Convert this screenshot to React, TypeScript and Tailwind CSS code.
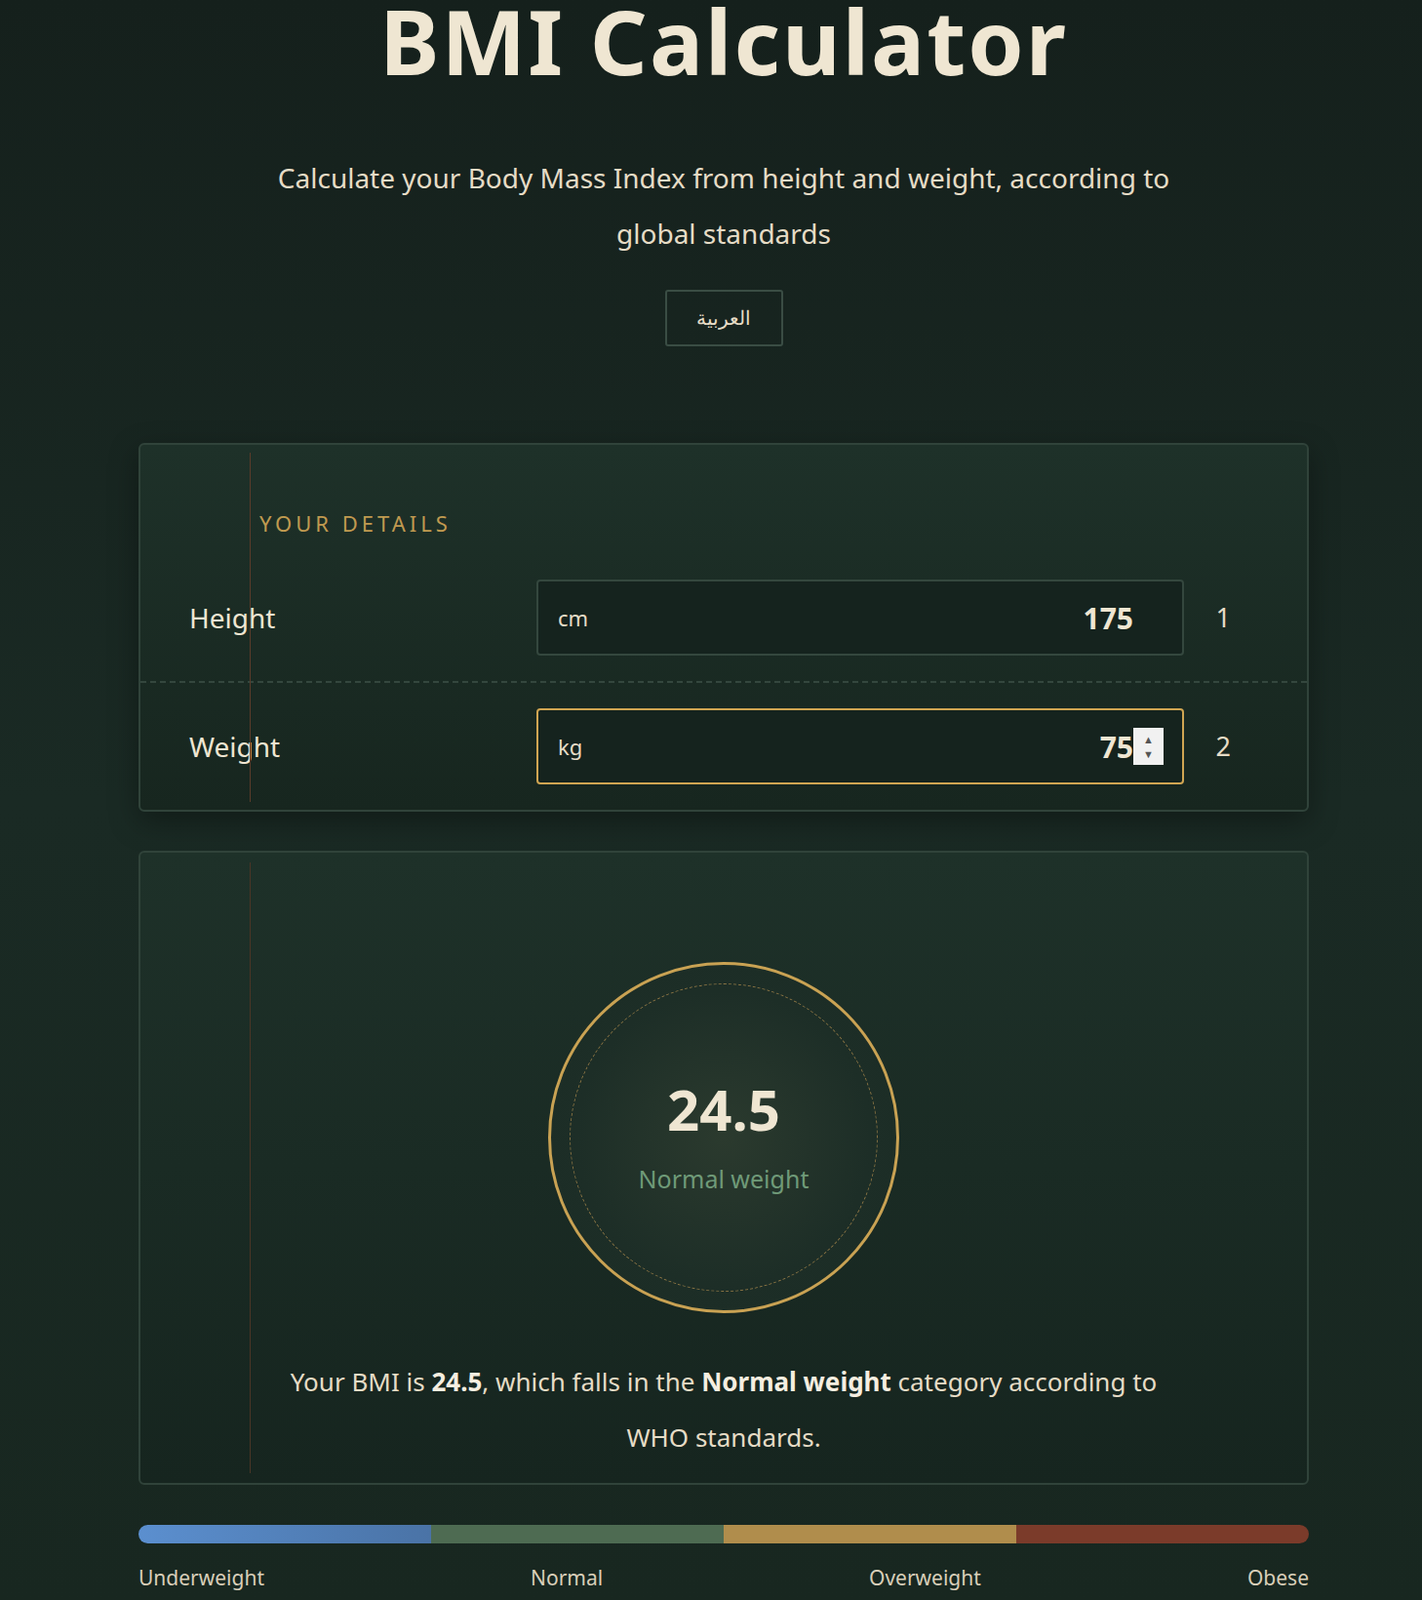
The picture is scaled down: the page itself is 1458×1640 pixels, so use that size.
import React from 'react';

const sans = "[font-family:'Noto_Sans',sans-serif]";
const serif = "[font-family:'Liberation_Serif',serif]";

const Row = ({ label, unit, value, n, active }: { label: string; unit: string; value: string; n: string; active?: boolean }) => (
  <div className="flex items-center h-[130px] pl-[50px] pr-[66px]">
    <div className="w-[356px] text-[28px] text-[#efe6d2]">{label}</div>
    <div
      className={`flex-1 h-[78px] rounded-[4px] flex items-center justify-between pl-5 pr-[50px] bg-[#15231e] border-2 ${
        active ? 'border-[#d0a552]' : 'border-[#34473e]'
      }`}
    >
      <span className="text-[22px] text-[#e6dcc6]">{unit}</span>
      <span className="relative flex items-center text-[30px] font-bold text-[#efe6d2]">
        {value}
        {active && (
          <span className="absolute left-full w-[31px] h-[38px] bg-[#f1f1f1] flex flex-col items-center justify-center text-[11px] text-[#555] leading-[15px]">
            <span>▲</span>
            <span>▼</span>
          </span>
        )}
      </span>
    </div>
    <div className={`${serif} w-[60px] text-right pr-3 text-[27px] text-[#e6dcc6]`}>{n}</div>
  </div>
);

export default function App() {
  return (
    <div className={`${sans} min-h-[1640px] pl-[26px] bg-gradient-to-b from-[#15201c] via-[#1a2a24] to-[#182720] text-[#e6dcc6] flex flex-col items-center`}>
      <h1 className={`${serif} text-[92px] font-bold leading-none text-[#efe6d2] mt-[-4px] tracking-[2px]`}>BMI Calculator</h1>
      <p className="mt-[66px] w-[960px] text-center text-[28px] leading-[57px] text-[#e6dcc6]">
        Calculate your Body Mass Index from height and weight, according to global standards
      </p>
      <button className="mt-[29px] w-[121px] h-[58px] border-2 border-[#3a4d44] rounded-[3px] text-[20px] text-[#e6dcc6]">
        العربية
      </button>

      <div className="relative mt-[99px] w-[1200px] rounded-[6px] border-2 border-[#30433a] bg-gradient-to-b from-[#1e3129] to-[#17261f] shadow-[0_10px_30px_rgba(0,0,0,0.35)]">
        <div className="absolute left-[112px] top-[8px] bottom-[8px] w-px bg-[#5a3b2a]" />
        <div className="pt-[64px] pl-[122px] text-[22px] tracking-[4px] text-[#c09a50]">YOUR DETAILS</div>
        <div className="mt-[15px]">
          <Row label="Height" unit="cm" value="175" n="1" />
          <div className="border-t-2 border-dashed border-[#34473e]" />
          <Row label="Weight" unit="kg" value="75" n="2" active />
        </div>
      </div>

      <div className="relative mt-[40px] w-[1200px] h-[650px] rounded-[6px] border-2 border-[#30433a] bg-gradient-to-b from-[#1e3129] to-[#16251f] flex flex-col items-center">
        <div className="absolute left-[112px] top-[10px] bottom-[10px] w-px bg-[#4a3526]" />
        <div className="mt-[112px] w-[360px] h-[360px] rounded-full border-[3px] border-[#c9a253] flex items-center justify-center bg-[radial-gradient(circle,#2b3a2e_0%,#1d2e27_60%,#1a2b24_100%)]">
          <div className="w-[316px] h-[316px] rounded-full border border-dashed border-[#8a7444] flex flex-col items-center justify-center">
            <div className={`${serif} text-[58px] font-bold text-[#efe6d2] leading-none mt-[4px]`}>24.5</div>
            <div className="mt-[24px] text-[25px] text-[#6f9a78]">Normal weight</div>
          </div>
        </div>
        <p className="mt-[42px] w-[900px] text-center text-[26px] leading-[57px] text-[#e6dcc6]">
          Your BMI is <b className="text-[#f5eee0]">24.5</b>, which falls in the <b className="text-[#f5eee0]">Normal weight</b> category according to WHO standards.
        </p>
      </div>

      <div className="mt-[41px] w-[1200px]">
        <div className="flex h-[19px] rounded-full overflow-hidden">
          <div className="flex-1 bg-gradient-to-r from-[#5b8fcf] to-[#4a73a6]" />
          <div className="flex-1 bg-[#4e6b52]" />
          <div className="flex-1 bg-[#b08d4c]" />
          <div className="flex-1 bg-[#7b3b2a]" />
        </div>
        <div className="mt-[20px] flex text-[21px] text-[#d9cfb9]">
          <span className="w-[402px]">Underweight</span>
          <span className="w-[347px]">Normal</span>
          <span className="flex-1">Overweight</span>
          <span>Obese</span>
        </div>
      </div>
    </div>
  );
}
